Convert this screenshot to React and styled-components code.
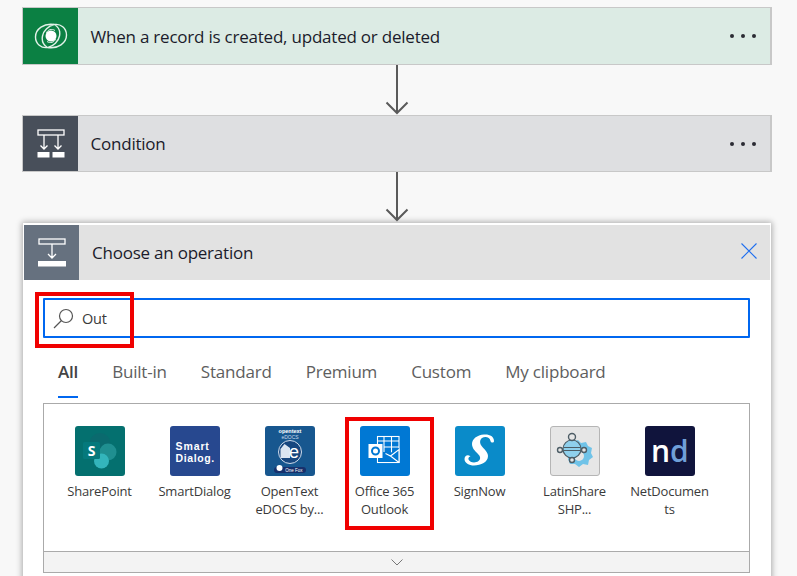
import styled, { createGlobalStyle } from 'styled-components'

const GlobalStyle = createGlobalStyle`
    html, body {
        margin: 0;
        padding: 0;
        height: 576px;
        overflow: hidden;
        background-color: #f8f8f8;
    }
    * {
        box-sizing: border-box;
    }
`

const Page = styled.div`
    position: relative;
    width: 797px;
    height: 576px;
    overflow: hidden;
    padding: 7px 25px 0 22px;
    font-family: 'Open Sans', 'Liberation Sans', sans-serif;
    color: #1f1f1f;
`

const TriggerCard = styled.div`
    display: flex;
    align-items: stretch;
    height: ${(props) => props.$height}px;
    border: 1px solid #c8c8c8;
    border-right-width: 2px;
    background-color: ${(props) => props.$bg};
`

const IconTile = styled.div`
    flex: 0 0 55px;
    display: flex;
    align-items: center;
    justify-content: center;
    background-color: ${(props) => props.$bg};
`

const CardTitle = styled.div`
    flex: 1;
    display: flex;
    align-items: center;
    padding-left: 12.5px;
    font-size: 17px;
    letter-spacing: -0.22px;
    color: #1b1b2b;
`

const MoreDots = styled.div`
    display: flex;
    gap: 7px;
    align-items: center;
    margin-right: 14px;
`

const Dot = styled.span`
    width: 4px;
    height: 4px;
    border-radius: 50%;
    background-color: #2b2b33;
`

const Connector = styled.div`
    display: flex;
    justify-content: center;
    height: ${(props) => props.$height}px;
`

const Panel = styled.div`
    margin: 1px 1px 0 1px;
    height: 400px;
    background-color: #fff;
    border: 1px solid #fff;
    border-top-width: 2px;
    box-shadow: 0 0 6px 1px rgba(0, 0, 0, 0.32);
`

const PanelHeader = styled.div`
    display: flex;
    align-items: stretch;
    height: 55px;
    background-color: #e2e2e2;
`

const PanelTitle = styled.div`
    flex: 1;
    display: flex;
    align-items: center;
    padding-left: 13px;
    font-size: 17px;
    letter-spacing: -0.23px;
    color: #1b1b2b;
`

const CloseButton = styled.div`
    display: flex;
    align-items: center;
    margin-right: 13px;
    margin-top: -3px;
`

const PanelBody = styled.div`
    padding: 18px 20px 0 19px;
`

const SearchBox = styled.div`
    display: flex;
    align-items: center;
    height: 40px;
    border: 2px solid #0067f0;
    border-radius: 1px;
    padding-left: 8px;
    gap: 8px;
    font-size: 14.5px;
    letter-spacing: -0.2px;
    color: #3a3a3a;
`

const TabRow = styled.div`
    display: flex;
    height: 60px;
    padding: 18px 0 0 15px;
    gap: 34px;
`

const Tab = styled.div`
    height: 42px;
    font-size: 17px;
    letter-spacing: -0.2px;
    line-height: 32px;
    font-weight: ${(props) => (props.$active ? 600 : 400)};
    color: ${(props) => (props.$active ? '#444' : '#5e5e5e')};
    border-bottom: 2px solid ${(props) => (props.$active ? '#0067f0' : 'transparent')};
`

const ConnectorBox = styled.div`
    margin-top: 5px;
    border: 1px solid #aaa;
`

const ConnectorGrid = styled.div`
    display: flex;
    height: 147px;
    padding: 22px 0 0 8px;
`

const ConnectorItem = styled.div`
    flex: 0 0 95px;
    display: flex;
    flex-direction: column;
    align-items: center;
`

const Logo = styled.div`
    width: 50px;
    height: 50px;
    border-radius: 3px;
    overflow: hidden;
    display: flex;
    align-items: center;
    justify-content: center;
    background-color: ${(props) => props.$bg};
    border: ${(props) => (props.$outlined ? '1px solid #b5b5b5' : 'none')};
`

const ConnectorName = styled.div`
    width: 84px;
    margin-top: 6px;
    font-size: 13px;
    letter-spacing: -0.2px;
    line-height: 18px;
    text-align: center;
    color: #3a3a3a;
`

const ExpandBar = styled.div`
    display: flex;
    justify-content: center;
    align-items: center;
    height: 21px;
    border-top: 1px solid #aaa;
    background-color: #f3f3f3;
`

const RedBox = styled.div`
    position: absolute;
    left: ${(props) => props.$x}px;
    top: ${(props) => props.$y}px;
    width: ${(props) => props.$w}px;
    height: ${(props) => props.$h}px;
    border: 4px solid #f00000;
`

function DownArrow({ height }) {
    return (
        <svg width="30" height={height} viewBox={`0 0 30 ${height}`} fill="none" stroke="#5a5a5a" strokeWidth="2">
            <path d={`M15 0V${height - 2}`} />
            <path d={`M4.5 ${height - 12.5}L15 ${height - 2}L25.5 ${height - 12.5}`} />
        </svg>
    )
}

function DataverseIcon() {
    const crescent = 'M20 1.500C10 0 1.500 6 1.500 14C1.500 21 7.500 25.500 13.500 24.500C9.500 22 7.500 18 8.500 13C9.500 7.500 14.500 3 20 1.500Z'
    return (
        <svg width="34" height="26" viewBox="0 0 34 26" fill="none" stroke="#e3f1e9" strokeWidth="1.400">
            <path d={crescent} />
            <path d={crescent} transform="rotate(180 17 13)" />
            <circle cx="17" cy="13" r="5.500" fill="#fff" stroke="none" />
            <path d="M12.500 10C13.500 6.500 18 5.500 21 7.500" strokeWidth="1" />
            <path d="M21.500 16C20.500 19.500 16 20.500 13 18.500" strokeWidth="1" />
        </svg>
    )
}

function ConditionIcon() {
    return (
        <svg width="28" height="29" viewBox="0 0 28 29" fill="none" stroke="#fff" strokeWidth="1.300">
            <rect x="1" y="1" width="26" height="5" />
            <path d="M7 6V20M3.500 16.500L7 20L10.500 16.500M21 6V20M17.500 16.500L21 20L24.500 16.500" />
            <rect x="0.500" y="23" width="12" height="5.500" fill="#fff" stroke="none" />
            <rect x="15.500" y="23" width="12" height="5.500" fill="#fff" stroke="none" />
        </svg>
    )
}

function OperationIcon() {
    return (
        <svg width="28" height="29" viewBox="0 0 28 29" fill="none" stroke="#fff" strokeWidth="1.300">
            <rect x="1" y="1" width="26" height="5" />
            <path d="M14 6V20M10 16L14 20L18 16" />
            <rect x="0" y="23" width="28" height="5.500" fill="#fff" stroke="none" />
        </svg>
    )
}

function SharePointLogo() {
    return (
        <svg width="50" height="50" viewBox="0 0 50 50">
            <circle cx="25" cy="17.500" r="10.500" fill="#0a6a6e" />
            <circle cx="33" cy="26" r="8.500" fill="#1f8f90" />
            <circle cx="26.500" cy="35" r="7.500" fill="#33b5bb" />
            <rect x="8" y="16" width="17" height="17" rx="1.500" fill="#05797c" />
            <text x="16.500" y="29.500" textAnchor="middle" fontSize="14" fontWeight="700" fontFamily="'Open Sans', sans-serif" fill="#fff">S</text>
        </svg>
    )
}

function SmartDialogLogo() {
    return (
        <svg width="50" height="50" viewBox="0 0 50 50" fontFamily="'Liberation Sans', sans-serif" fontWeight="700" fill="#fff" fontSize="10.500">
            <text x="5.500" y="23.500" letterSpacing="0.900">Smart</text>
            <text x="5.500" y="36" letterSpacing="0.600">Dialog.</text>
        </svg>
    )
}

function OpenTextLogo() {
    return (
        <svg width="50" height="50" viewBox="0 0 50 50" fontFamily="'Liberation Sans', sans-serif" fill="#fff">
            <circle cx="25" cy="26" r="11.500" fill="#17477f" stroke="#cfdcec" strokeWidth="1" />
            <path d="M15.500 32V23L19.500 18L25 22V32Z" fill="#dbe6f2" />
            <rect x="9" y="41" width="32" height="6" rx="3" fill="#17306c" />
            <circle cx="14.500" cy="42" r="3" fill="#fff" />
            <text x="25" y="6.500" textAnchor="middle" fontSize="5.500" fontWeight="700">opentext</text>
            <text x="25" y="12.500" textAnchor="middle" fontSize="5" fill="#c9d9ea">eDOCS</text>
            <text x="29" y="32" textAnchor="middle" fontSize="18">e</text>
            <text x="29" y="46" textAnchor="middle" fontSize="4.500">One Fox</text>
        </svg>
    )
}

function OutlookLogo() {
    return (
        <svg width="50" height="50" viewBox="0 0 50 50" fill="none">
            <rect x="17.500" y="10.500" width="21.500" height="26" stroke="#fff" strokeWidth="1.100" />
            <path d="M17.500 15H39M24 15H39M24 21H39M24 10.500V26M31.500 10.500V27" stroke="#fff" strokeWidth="1.100" />
            <path d="M25 30L39 22V36.500H18V32Z" fill="#0078d4" />
            <path d="M18 36.500H39V23.500L30.500 30L25.500 27.500M30.500 30L39 36.500" stroke="#fff" strokeWidth="1.100" />
            <rect x="8.500" y="18" width="14" height="14" fill="#fff" />
            <circle cx="15.500" cy="25" r="3.500" stroke="#0078d4" strokeWidth="2" />
        </svg>
    )
}

function SignNowLogo() {
    return (
        <svg width="50" height="50" viewBox="0 0 50 50">
            <path
                fill="#fff"
                d="M39 15C39 10 34 8 29 8.500C22 9 17 13 17 18C17 22 20 25 23 28C25.500 30.500 26 33 23.500 35C20 37.500 15 36.500 13.500 33.500C13 32 14 30.500 15.500 30.500C13 28 9.500 29.500 9.500 33C9.500 37 14 39.500 19 39.500C26 39.500 33 36 33 30C33 26 29 23 27 20.500C24.500 17.500 24.500 14 27 12C30 10 35 11 35.500 15C36 17 39 17 39 15Z"
            />
        </svg>
    )
}

function LatinShareLogo() {
    return (
        <svg width="48" height="48" viewBox="0 0 48 48" fill="none">
            <path d="M21 15L27 13L30 16L35 15L37 19L41 21L40 26L42 30L38 33L37 38L32 37L28 40L24 37L19 37L17 32Z" fill="#70c3e8" />
            <circle cx="28" cy="29" r="5" fill="#e6e6e6" />
            <circle cx="21" cy="22" r="9" fill="#8fd0ec" stroke="#4d5d66" strokeWidth="1.200" />
            <path d="M12.500 20.500H29.500M12.500 23.500H29.500" stroke="#4d5d66" strokeWidth="1" />
            <g fill="#e6e6e6" stroke="#4d5d66" strokeWidth="1.400">
                <circle cx="21" cy="10" r="3.500" />
                <circle cx="9" cy="23" r="2.500" />
                <circle cx="33" cy="23" r="2.500" />
                <circle cx="21" cy="33" r="2.500" />
            </g>
        </svg>
    )
}

function NetDocumentsLogo() {
    return (
        <svg width="50" height="50" viewBox="0 0 50 50" fontFamily="'Open Sans', sans-serif" fontWeight="600" fontSize="30">
            <text>
                <tspan x="6" y="36" fill="#fff">n</tspan>
                <tspan x="25" y="36" fill="#6f9fd8">d</tspan>
            </text>
        </svg>
    )
}

const tabs = ['All', 'Built-in', 'Standard', 'Premium', 'Custom', 'My clipboard']

const connectors = [
    { name: 'SharePoint', bg: '#04706f', logo: <SharePointLogo /> },
    { name: 'SmartDialog', bg: '#27488f', logo: <SmartDialogLogo /> },
    { name: 'OpenText eDOCS by...', bg: '#17578f', logo: <OpenTextLogo /> },
    { name: 'Office 365 Outlook', bg: '#0078d4', logo: <OutlookLogo /> },
    { name: 'SignNow', bg: '#0a8bc9', logo: <SignNowLogo /> },
    { name: 'LatinShare SHP...', bg: '#e6e6e6', logo: <LatinShareLogo />, outlined: true },
    { name: 'NetDocumen\u200bts', bg: '#10143c', logo: <NetDocumentsLogo /> },
]

function App() {
    return (
        <Page>
            <GlobalStyle />
            <TriggerCard $height={58} $bg="#dcebe4">
                <IconTile $bg="#0b8043">
                    <DataverseIcon />
                </IconTile>
                <CardTitle>When a record is created, updated or deleted</CardTitle>
                <MoreDots>
                    <Dot />
                    <Dot />
                    <Dot />
                </MoreDots>
            </TriggerCard>
            <Connector $height={50}>
                <DownArrow height={50} />
            </Connector>
            <TriggerCard $height={57} $bg="#dedfe1">
                <IconTile $bg="#484f5a">
                    <ConditionIcon />
                </IconTile>
                <CardTitle>Condition</CardTitle>
                <MoreDots>
                    <Dot />
                    <Dot />
                    <Dot />
                </MoreDots>
            </TriggerCard>
            <Connector $height={50}>
                <DownArrow height={50} />
            </Connector>
            <Panel>
                <PanelHeader>
                    <IconTile $bg="#66717f">
                        <OperationIcon />
                    </IconTile>
                    <PanelTitle>Choose an operation</PanelTitle>
                    <CloseButton>
                        <svg width="16" height="16" viewBox="0 0 16 16" stroke="#1f6fef" strokeWidth="1.100">
                            <path d="M0.500 0.500L15.500 15.500M15.500 0.500L0.500 15.500" />
                        </svg>
                    </CloseButton>
                </PanelHeader>
                <PanelBody>
                    <SearchBox>
                        <svg width="21" height="21" viewBox="0 0 21 21" fill="none" stroke="#555" strokeWidth="1.200">
                            <circle cx="13" cy="8" r="6.500" />
                            <path d="M8.500 12.500L1 20" />
                        </svg>
                        Out
                    </SearchBox>
                    <TabRow>
                        {tabs.map((tab, i) => (
                            <Tab key={tab} $active={i === 0}>
                                {tab}
                            </Tab>
                        ))}
                    </TabRow>
                    <ConnectorBox>
                        <ConnectorGrid>
                            {connectors.map((item) => (
                                <ConnectorItem key={item.name}>
                                    <Logo $bg={item.bg} $outlined={item.outlined}>
                                        {item.logo}
                                    </Logo>
                                    <ConnectorName>{item.name}</ConnectorName>
                                </ConnectorItem>
                            ))}
                        </ConnectorGrid>
                        <ExpandBar>
                            <svg width="12" height="7" viewBox="0 0 12 7" fill="none" stroke="#777" strokeWidth="1">
                                <path d="M0.500 0.500L6 6L11.500 0.500" />
                            </svg>
                        </ExpandBar>
                    </ConnectorBox>
                </PanelBody>
            </Panel>
            <RedBox $x={35} $y={292} $w={99} $h={56} />
            <RedBox $x={345} $y={417} $w={89} $h={113} />
        </Page>
    )
}

export default App
